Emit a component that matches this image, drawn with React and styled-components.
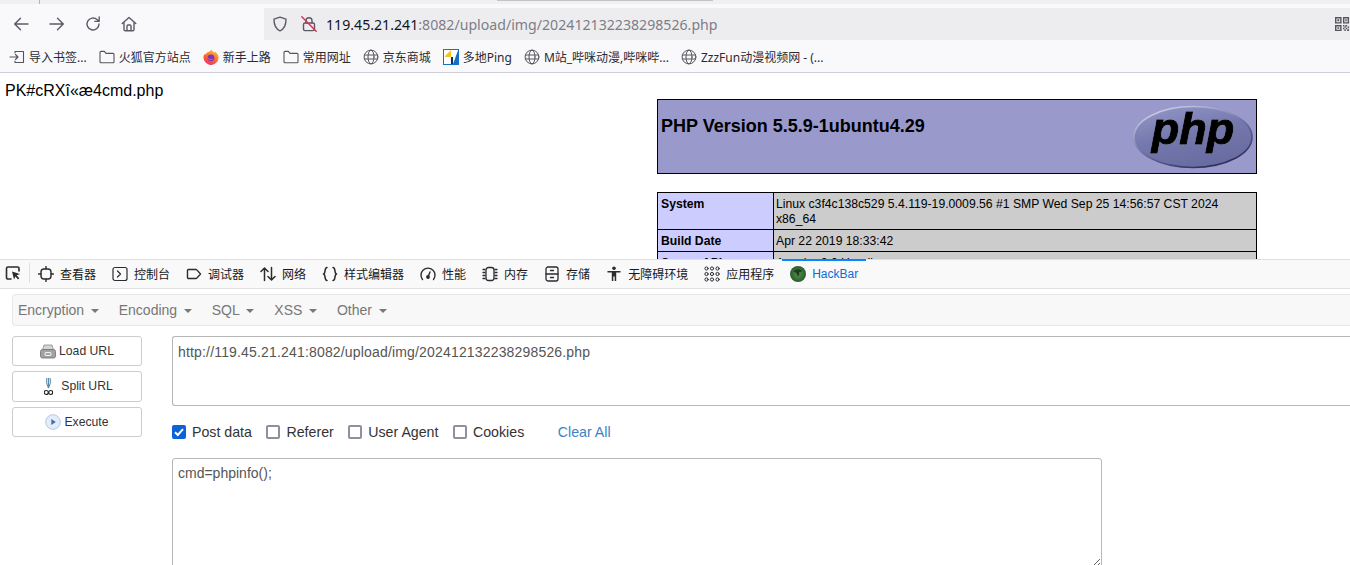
import React from "react";
import styled, { createGlobalStyle } from "styled-components";

const Global = createGlobalStyle`
  html, body { margin: 0; padding: 0; width: 1350px; height: 565px; overflow: hidden; background: #fff; }
  * { box-sizing: border-box; }
`;

const UI = `"Noto Sans", "Noto Sans CJK SC", sans-serif`;
const CJK = `"Liberation Sans", "Noto Sans CJK SC", sans-serif`;
const ARIAL = `"Liberation Sans", Arial, sans-serif`;

const Shell = styled.div`width: 1350px; height: 565px; overflow: hidden; display: flex; flex-direction: column;`;
const TabStrip = styled.div`height: 4px; background: #f0f0f4; flex: none; display: flex; align-items: flex-start;`;
const TabDivider = styled.div`width: 1px; height: 4px; margin-left: 39px; background: #b4b4b8;`;
const TabShadow = styled.div`width: 216px; height: 1px; margin-left: 457px; background: #c4c4c8;`;
const NavBar = styled.div`height: 36px; flex: none; background: #f9f9fb; display: flex; align-items: flex-end;`;
const NavButtons = styled.div`width: 264px; height: 32px; flex: none; display: flex; align-items: center; gap: 20px; padding-left: 13px; color: #5b5b66;`;
const UrlBar = styled.div`flex: 1; height: 32px; background: #ededf0; display: flex; align-items: center; padding-left: 8px; overflow: hidden; position: relative; font: 14.15px ${UI}; color: #15141a; white-space: nowrap;`;
const UrlIcons = styled.div`display: flex; align-items: center; gap: 13px; width: 54px; flex: none; color: #5b5b66;`;
const Dim = styled.span`color: #7e7e86;`;
const QrSlot = styled.div`position: absolute; right: 0; top: 9px; width: 15px; height: 15px;`;

const Bookmarks = styled.div`height: 33px; flex: none; background: #f9f9fb; border-bottom: 1px solid #cfcfd8; display: flex; align-items: center; gap: 12px; padding: 5px 0 3px 9px; font: 12px ${UI}; color: #15141a;`;
const Bookmark = styled.div`display: flex; align-items: center; gap: 4px; white-space: nowrap; color: #2b2a33;`;

const Page = styled.div`height: 186px; flex: none; overflow: hidden; background: #fff; padding: 8px 5px 0; font: 16px/20px ${ARIAL}; color: #000;`;
const PageLine = styled.div`height: 18px;`;
const Center = styled.div`width: 600px; margin-left: 652px;`;
const PhpHead = styled.div`height: 75px; background: #9999cc; border: 1px solid #000; display: flex; justify-content: space-between; padding: 5px 3px 0;`;
const PhpTitle = styled.h1`margin: 12px 0 0; font: bold 18px/18px ${ARIAL}; color: #000;`;
const PhpTable = styled.table`width: 600px; margin-top: 18px; border-collapse: collapse; table-layout: fixed; font: 12.2px/15px ${ARIAL}; color: #000;`;
const Key = styled.td`width: 116px; background: #ccccff; border: 1px solid #000; font-weight: bold; padding: 4px 3px 2px; vertical-align: top;`;
const Val = styled.td`background: #cccccc; border: 1px solid #000; padding: 4px 2px 2px; vertical-align: top;`;

const DevTabs = styled.div`height: 30px; flex: none; background: #f9f9fa; border-top: 1px solid #e0e0e2; border-bottom: 1px solid #e0e0e2; display: flex; align-items: flex-start; font: 12px ${CJK}; color: #38383d;`;
const Picker = styled.div`width: 30px; height: 20px; flex: none; margin-top: 3px; padding-left: 5px; display: flex; align-items: center; border-right: 1px solid #e0e0e2;`;
const DevTab = styled.div`
  position: relative; height: 27px; padding: 0 8px; display: flex; align-items: center; gap: 6px; white-space: nowrap;
  color: ${p => (p.$active ? "#0a6cd6" : "#18181a")};
  ${p => p.$active && `&::before { content: ""; position: absolute; left: 0; right: 0; top: -1px; height: 2px; background: #0a84ff; }`}
`;

const Panel = styled.div`flex: 1; background: #fff; padding: 5px 0 0 12px; font: 14px ${ARIAL}; min-height: 0;`;
const Menu = styled.div`height: 32px; background: #f8f8f8; border: 1px solid #e7e7e7; border-right: 0; border-radius: 4px 0 0 4px; display: flex; align-items: center; gap: 20px; padding-left: 5px; color: #777;`;
const MenuItem = styled.span`display: flex; align-items: center; gap: 6.6px;`;
const Caret = styled.i`width: 0; height: 0; border-top: 4px solid #777; border-left: 4px solid transparent; border-right: 4px solid transparent; margin-top: 2px;`;
const Body = styled.div`display: flex; gap: 30px; padding-top: 10px;`;
const Buttons = styled.div`width: 130px; flex: none; display: flex; flex-direction: column; gap: 5px;`;
const Btn = styled.div`height: ${p => p.$h}px; background: #fff; border: 1px solid #ccc; border-radius: 3px; display: flex; align-items: center; justify-content: center; gap: ${p => p.$gap}px; padding-left: ${p => p.$pl || 0}px; font: 12.2px ${ARIAL}; color: #333;`;
const BtnText = styled.span`margin-bottom: ${p => p.$up || 0}px;`;
const Main = styled.div`flex: 1; min-width: 0; margin-right: -2px;`;
const Field = styled.textarea`
  display: block; width: ${p => p.$w}px; height: ${p => p.$h}px; padding: ${p => p.$top}px 5px; border: 1px solid #b7b7b7; border-radius: 3px;
  font: 14px/18px ${ARIAL}; letter-spacing: ${p => p.$track}px; color: #555; background: #fff; outline: 0; resize: ${p => p.$resize};
  ${p => p.$cut && "border-right: 0; border-top-right-radius: 0; border-bottom-right-radius: 0;"}
`;
const Checks = styled.div`height: 52px; display: flex; align-items: center; color: #333; font-size: 14.2px;`;
const Check = styled.label`display: flex; align-items: center; gap: 6px; margin-right: 14.5px;`;
const Box = styled.span`width: 14px; height: 14px; border-radius: 2px; display: flex; align-items: center; justify-content: center; background: ${p => (p.$on ? "#0c63d8" : "#fff")}; border: ${p => (p.$on ? "0" : "2px solid #8f8f9d")};`;
const Clear = styled.a`margin-left: 19px; color: #3f7fc4;`;
const Svg = styled.svg`display: block; flex: none;`;
const LogoText = styled.text`font: italic bold 45px ${ARIAL}; filter: drop-shadow(0 0 0.7px #d6d7ec);`;

const I = ({ children, s = 16, fill = "none", stroke = "currentColor", w = 1.4 }) => (
  <Svg width={s} height={s} viewBox="0 0 16 16" fill={fill} stroke={stroke} strokeWidth={w} strokeLinecap="round" strokeLinejoin="round">{children}</Svg>
);

const Back = () => <I><path d="M15 8H1.8M7.5 2.2 1.7 8l5.8 5.8" /></I>;
const Fwd = () => <I><path d="M1 8h13.2M8.5 2.2 14.3 8l-5.8 5.8" /></I>;
const Reload = () => <I><path d="M14 8a6 6 0 1 1-2-4.5L14 5.2M14.2 1v4.4H9.8" /></I>;
const Home = () => <I><path d="M1.2 7.6 8 1.6l6.8 6M3 6.5v7a1.3 1.3 0 0 0 1.3 1.3h7.4A1.3 1.3 0 0 0 13 13.5v-7M6 14.5V10a1 1 0 0 1 1-1h2a1 1 0 0 1 1 1v4.5" /></I>;
const ShieldI = () => <I><path d="M8 1.2 2 3.2c0 6 1.6 9.6 6 11.6 4.4-2 6-5.6 6-11.6z" /></I>;
const LockOff = () => (
  <I><path d="M5 7V4.8a3 3 0 0 1 6 0V7" /><rect x="2.5" y="7" width="11" height="7.6" rx="1.5" /><path d="M.8.8l14.4 14.4" stroke="#e22850" /></I>
);
const Qr = () => (
  <I s={15} fill="#55555c" stroke="none">
    <path fillRule="evenodd" d="M0 0h7v7H0zm1.5 1.5v4h4v-4zM2.5 2.5h2v2h-2zM8.500 0H15v7H8.500zM10 1.500v4h3.500v-4zM11 2.500h1.500v2H11zM0 8.500h7V15H0zM1.500 10v3.500h4V10zM2.500 11h2v1.500h-2zM8.500 8.500H10V10H8.500zM11 8.500h2V10h-2zM13.500 10H15v2h-1.500zM10 10h1.500v1.500H10zM8.500 11.500H10V13H8.500zM11.500 11.500H13V13h-1.500zM10 13h1.500v2H10zM13 13h2v2h-2z" />
  </I>
);

const ImportI = () => <I w={1.1} stroke="#55555c"><path d="M6 4V2.500h8.500v11H6V12M1 8h8M6.500 5.500 9 8l-2.500 2.500" /></I>;
const Folder = () => <I w={1.1} stroke="#55555c"><path d="M1 12.800V3.400c0-.6.4-1 1-1h3.400l1.600 2h7c.6 0 1 .4 1 1v7.400c0 .6-.4 1-1 1H2c-.6 0-1-.4-1-1z" /></I>;
const Globe = () => <I w={1} stroke="#55555c"><circle cx="8" cy="8" r="6.900" /><ellipse cx="8" cy="8" rx="3" ry="6.900" /><path d="M1.300 6h13.400M1.300 10h13.400" /></I>;
const Fox = () => (
  <Svg width="16" height="16" viewBox="0 0 16 16">
    <defs><linearGradient id="fx" x1="0.7" y1="0" x2="0.2" y2="1"><stop offset="0" stopColor="#ffc22e" /><stop offset="0.5" stopColor="#ff6a2b" /><stop offset="1" stopColor="#e8306d" /></linearGradient></defs>
    <path d="M8.600.6c.2 1.600 1.800 2 2.900 3.100.3-.5.400-.9.500-1.300C14 4 15.500 5.900 15.500 8.400A7.500 7.500 0 1 1 1.300 5c.2.500.5.800.8 1C3 3.500 6.500 3.500 8.600.6z" fill="url(#fx)" />
    <circle cx="8" cy="8.800" r="3.400" fill="#7a35c4" /><path d="M5 8.500c1 2 4 2.500 5.500.5-.5 2.500-5 3-5.500-.5z" fill="#f58a3c" />
  </Svg>
);
const Ping = () => (
  <Svg width="16" height="16" viewBox="0 0 16 16">
    <rect x=".5" y=".5" width="15" height="15" fill="#fff" stroke="#1273c4" />
    <path d="M8 1 2 7v1h6z" fill="#f5c518" /><path d="M15 1.500 10 15h5z" fill="#1273c4" /><path d="M8 8h2v7H8z" fill="#15304a" />
  </Svg>
);

const Pick = () => <I w={1.6} stroke="#2b2b30"><path d="M6 14H3a1.500 1.500 0 0 1-1.500-1.500v-9A1.500 1.500 0 0 1 3 2h9.500A1.500 1.500 0 0 1 14 3.500V6" /><path d="M7 6.500 15 9l-3.300 1.300 2.600 3-1.300 1.200-2.500-3L9 14.500z" fill="#2b2b30" stroke="none" /></I>;
const Insp = () => <I w={1.4} stroke="#2b2b30"><rect x="3" y="3" width="10" height="10" rx="3" /><path d="M8 .5v2.500M8 13v2.500M.5 8H3M13 8h2.500" /></I>;
const Cons = () => <I w={1.2} stroke="#2b2b30"><rect x="1" y="1.500" width="14" height="13" rx="2" /><path d="M5.500 5 8.500 8l-3 3" /></I>;
const Dbg = () => <I w={1.4} stroke="#2b2b30"><path d="M2.500 3.500h7.500a1 1 0 0 1 .8.400L14.500 8l-3.700 4.100a1 1 0 0 1-.8.400H2.500a1 1 0 0 1-1-1v-7a1 1 0 0 1 1-1z" /></I>;
const Net = () => <I w={1.500} stroke="#2b2b30"><path d="M4.500 14.500V2M1 5.500 4.500 2 8 5.500M11.500 1.500V14M8 10.500l3.500 3.500 3.500-3.500" /></I>;
const Braces = () => <I w={1.500} stroke="#2b2b30"><path d="M5 1.500c-3 0-1 6-3.500 6.500C4 8.500 2 14.500 5 14.500M11 1.500c3 0 1 6 3.500 6.500-2.500.5-.5 6.500-3.500 6.500" /></I>;
const Perf = () => <I w={1.400} stroke="#2b2b30"><path d="M2.500 13.500A7 7 0 1 1 13.500 13.500" /><path d="M8 11 10 6" /><circle cx="8" cy="11" r="1.200" fill="#2b2b30" /></I>;
const Mem = () => <I w={1.300} stroke="#2b2b30"><rect x="4" y="1.500" width="8" height="13" rx="2.500" /><path d="M1 3.500h2M1 6.500h2M1 9.500h2M1 12.500h2M13 3.500h2M13 6.500h2M13 9.500h2M13 12.500h2" /></I>;
const Store = () => <I w={1.300} stroke="#2b2b30"><rect x="2" y="1" width="12" height="14" rx="2" /><path d="M2 8h12M6.500 4.500h3M6.500 11.500h3" /></I>;
const Access = () => (
  <I fill="#2b2b30" stroke="none"><circle cx="8" cy="2.300" r="1.800" /><path d="M1.500 5h13v1.600H10.200V15H8.700v-4.500H7.300V15H5.800V6.600H1.500z" /></I>
);
const Apps = () => <I w={1} stroke="#2b2b30">{[2.500, 8, 13.500].flatMap(x => [2.500, 8, 13.500].map(y => <circle key={`${x}-${y}`} cx={x} cy={y} r="1.600" />))}</I>;
const Hack = () => (
  <Svg width="16" height="16" viewBox="0 0 16 16">
    <defs><radialGradient id="hb"><stop offset="0" stopColor="#55924a" /><stop offset="1" stopColor="#2a5c2e" /></radialGradient></defs>
    <circle cx="8" cy="8" r="8" fill="url(#hb)" /><path d="M3.500 5.500c2-2.500 6-3 8.500-.5-1 1-2 1-3 1 1 2 0 4-2 4 1-2-1-3.500-3.500-4.500z" fill="#1f3a21" />
  </Svg>
);

const PhpLogo = () => (
  <Svg width="120" height="64" viewBox="0 0 120 64">
    <defs>
      <linearGradient id="pf" x1="0.25" y1="0" x2="0.7" y2="1"><stop offset="0" stopColor="#9094c4" /><stop offset="0.45" stopColor="#7478ad" /><stop offset="1" stopColor="#666a9f" /></linearGradient>
      <linearGradient id="ps" x1="0.2" y1="0" x2="0.8" y2="1"><stop offset="0" stopColor="#d4d6ea" /><stop offset="0.5" stopColor="#6d70a6" /><stop offset="1" stopColor="#22244f" /></linearGradient>
    </defs>
    <ellipse cx="60" cy="32" rx="59" ry="30.500" fill="url(#pf)" stroke="url(#ps)" strokeWidth="1.600" />
    <LogoText x="60" y="39" textAnchor="middle" fill="#000" stroke="#000" strokeWidth="1.100">php</LogoText>
  </Svg>
);

const LoadI = () => (
  <Svg width="16" height="16" viewBox="0 0 16 16">
    <path d="M4 2h8l1.500 5h-11z" fill="#d4d4d4" stroke="#8a8a8a" strokeWidth=".8" />
    <rect x=".5" y="6.500" width="15" height="8.500" rx="2" fill="#a2a2a2" stroke="#6e6e6e" strokeWidth=".8" />
    <rect x="5" y="9.500" width="6" height="3" rx="1.500" fill="none" stroke="#f2f2f2" strokeWidth="1.100" />
  </Svg>
);
const SplitI = () => (
  <Svg width="9" height="19" viewBox="0 0 9 19" fill="none">
    <path d="M3 1c-1.200 4 0 7 1.500 10M6 1c1.200 4 0 7-1.500 10M4.500 1v9" stroke="#5c8cab" strokeWidth="1.100" />
    <circle cx="2.300" cy="15.500" r="2" stroke="#222" strokeWidth="1.200" /><circle cx="6.700" cy="15.500" r="2" stroke="#222" strokeWidth="1.200" />
  </Svg>
);
const ExecI = () => (
  <Svg width="16" height="16" viewBox="0 0 16 16">
    <circle cx="8" cy="8" r="7.300" fill="#e3ecf9" stroke="#b4c8e6" />
    <path d="M6.300 5v6l4.500-3z" fill="#3f6fb5" />
  </Svg>
);
const Tick = () => <Svg width="14" height="14" viewBox="0 0 14 14" fill="none"><path d="M3 7.300 5.800 10 11 4.200" stroke="#fff" strokeWidth="2" /></Svg>;

const marks = [
  [ImportI, "导入书签..."], [Folder, "火狐官方站点"], [Fox, "新手上路"], [Folder, "常用网址"],
  [Globe, "京东商城"], [Ping, "多地Ping"], [Globe, "M站_哔咪动漫,哔咪哔..."], [Globe, "ZzzFun动漫视频网 - (..."],
];
const tabs = [
  [Insp, "查看器"], [Cons, "控制台"], [Dbg, "调试器"], [Net, "网络"], [Braces, "样式编辑器"], [Perf, "性能"],
  [Mem, "内存"], [Store, "存储"], [Access, "无障碍环境"], [Apps, "应用程序"], [Hack, "HackBar", true],
];
const menu = ["Encryption", "Encoding", "SQL", "XSS", "Other"];
const checks = [["Post data", true], ["Referer"], ["User Agent"], ["Cookies"]];
const url = "http://119.45.21.241:8082/upload/img/202412132238298526.php";

export default function App() {
  return (
    <Shell>
      <Global />
      <TabStrip><TabDivider /><TabShadow /></TabStrip>
      <NavBar>
        <NavButtons><Back /><Fwd /><Reload /><Home /></NavButtons>
        <UrlBar>
          <UrlIcons><ShieldI /><LockOff /></UrlIcons>
          <span>119.45.21.241<Dim>:8082/upload/img/202412132238298526.php</Dim></span>
          <QrSlot><Qr /></QrSlot>
        </UrlBar>
      </NavBar>
      <Bookmarks>
        {marks.map(([Icon, label]) => <Bookmark key={label}><Icon />{label}</Bookmark>)}
      </Bookmarks>
      <Page>
        <PageLine>PK#cRXî«æ4cmd.php</PageLine>
        <Center>
          <PhpHead><PhpTitle>PHP Version 5.5.9-1ubuntu4.29</PhpTitle><PhpLogo /></PhpHead>
          <PhpTable>
            <tbody>
              <tr><Key>System</Key><Val>Linux c3f4c138c529 5.4.119-19.0009.56 #1 SMP Wed Sep 25 14:56:57 CST 2024 x86_64</Val></tr>
              <tr><Key>Build Date</Key><Val>Apr 22 2019 18:33:42</Val></tr>
              <tr><Key>Server API</Key><Val>Apache 2.0 Handler</Val></tr>
            </tbody>
          </PhpTable>
        </Center>
      </Page>
      <DevTabs>
        <Picker><Pick /></Picker>
        {tabs.map(([Icon, label, active]) => <DevTab key={label} $active={active}><Icon />{label}</DevTab>)}
      </DevTabs>
      <Panel>
        <Menu>{menu.map(m => <MenuItem key={m}>{m}<Caret /></MenuItem>)}</Menu>
        <Body>
          <Buttons>
            <Btn $h={30} $gap={3}><LoadI />Load URL</Btn>
            <Btn $h={31} $gap={8} $pl={3}><SplitI /><BtnText $up={2}>Split URL</BtnText></Btn>
            <Btn $h={30} $gap={3}><ExecI />Execute</Btn>
          </Buttons>
          <Main>
            <Field $w={1180} $h={70} $top={6} $track={0.17} $resize="none" $cut readOnly value={url} />
            <Checks>
              {checks.map(([label, on]) => (
                <Check key={label}><Box $on={on}>{on && <Tick />}</Box>{label}</Check>
              ))}
              <Clear>Clear All</Clear>
            </Checks>
            <Field $w={930} $h={110} $top={5} $track={0} $resize="both" readOnly value="cmd=phpinfo();" />
          </Main>
        </Body>
      </Panel>
    </Shell>
  );
}
